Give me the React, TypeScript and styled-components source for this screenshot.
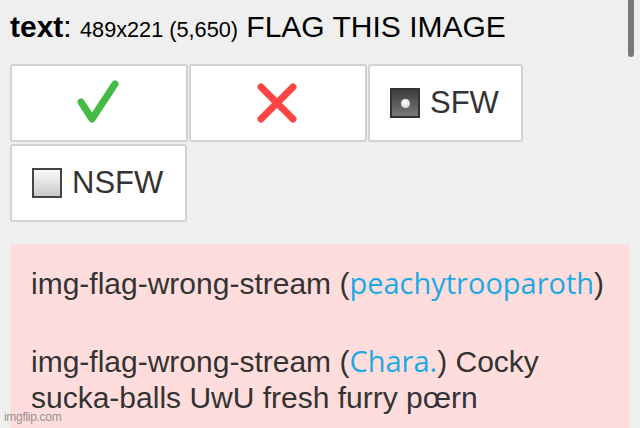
import React from "react";
import styled, { createGlobalStyle } from "styled-components";

const GlobalStyle = createGlobalStyle`
    html, body {
        margin: 0;
        padding: 0;
        background: #efefef;
        font-family: "Liberation Sans", Arial, sans-serif;
        overflow: hidden;
    }
`;

const Page = styled.div`
    position: relative;
    width: 640px;
    height: 428px;
    overflow: hidden;
`;

const Header = styled.div`
    box-sizing: border-box;
    height: 44px;
    padding: 10px 10px 0;
    font-size: 30px;
    line-height: 33px;
    color: #000;
    white-space: nowrap;
    b {
        font-weight: bold;
    }
    .meta {
        font-size: 21.7px;
        line-height: 1;
    }
`;

const ButtonRow = styled.div`
    display: flex;
    flex-wrap: wrap;
    column-gap: 1px;
    row-gap: 2px;
    margin: 20px 10px 0;
`;

const FlagButton = styled.div<{ $width?: number }>`
    box-sizing: border-box;
    height: 78px;
    width: ${(p) => (p.$width ? `${p.$width}px` : "auto")};
    padding: 0 22px 0 20px;
    display: flex;
    align-items: center;
    justify-content: center;
    gap: 10px;
    background: #fff;
    border: 2px solid #d2d2d2;
    border-radius: 3px;
    font-size: 31px;
    color: #333;
    cursor: pointer;
`;

const Box = styled.div<{ $checked?: boolean }>`
    box-sizing: border-box;
    width: 30px;
    height: 30px;
    border: 2px solid ${(p) => (p.$checked ? "#333" : "#444")};
    background: ${(p) =>
        p.$checked
            ? "linear-gradient(#3c3c3c, #7a7a7a)"
            : "linear-gradient(#fafafa, #c9c9c9)"};
    display: flex;
    align-items: center;
    justify-content: center;
    &::after {
        content: "";
        display: ${(p) => (p.$checked ? "block" : "none")};
        width: 9px;
        height: 9px;
        border-radius: 50%;
        background: radial-gradient(circle at 40% 35%, #fff, #ccc);
    }
`;

const Notice = styled.div`
    margin: 22px 10px 0;
    padding: 22px 21px 40px;
    background: #ffdddd;
    color: #333;
    font-size: 30px;
    line-height: 36px;
    min-height: 200px;
    display: flex;
    flex-direction: column;
    gap: 42px;
`;

const Entry = styled.div`
    a {
        color: #1ea9e1;
        text-decoration: none;
        font-family: "Open Sans", sans-serif;
        font-size: 29px;
        line-height: 1;
    }
`;

const Watermark = styled.div`
    position: absolute;
    left: 4px;
    bottom: 4px;
    font-size: 12px;
    color: rgba(120, 120, 120, 0.8);
    letter-spacing: -0.3px;
`;

const ScrollThumb = styled.div`
    position: absolute;
    right: 6px;
    top: 0;
    width: 6px;
    height: 57px;
    background: #787878;
    border-radius: 0 0 3px 3px;
`;

function Check() {
    return (
        <svg width="44" height="46" viewBox="0 0 44 46">
            <path
                d="M5 22 L16 39 L39 4"
                fill="none"
                stroke="#44bb44"
                strokeWidth="7"
                strokeLinecap="round"
                strokeLinejoin="round"
            />
        </svg>
    );
}

function Cross() {
    return (
        <svg width="40" height="40" viewBox="0 0 40 40">
            <path
                d="M4 4 L36 36 M36 4 L4 36"
                fill="none"
                stroke="#ff4444"
                strokeWidth="7"
                strokeLinecap="round"
            />
        </svg>
    );
}

export default function App() {
    return (
        <Page>
            <GlobalStyle />
            <Header>
                <b>text</b>: <span className="meta">489x221 (5,650)</span> FLAG THIS IMAGE
            </Header>
            <ButtonRow>
                <FlagButton $width={178}>
                    <Check />
                </FlagButton>
                <FlagButton $width={178}>
                    <Cross />
                </FlagButton>
                <FlagButton>
                    <Box $checked />
                    SFW
                </FlagButton>
                <FlagButton>
                    <Box />
                    NSFW
                </FlagButton>
            </ButtonRow>
            <Notice>
                <Entry>
                    img-flag-wrong-stream (<a href="#">peachytrooparoth</a>)
                </Entry>
                <Entry>
                    img-flag-wrong-stream (<a href="#">Chara.</a>) Cocky sucka-balls UwU fresh furry pœrn
                </Entry>
            </Notice>
            <Watermark>imgflip.com</Watermark>
            <ScrollThumb />
        </Page>
    );
}
